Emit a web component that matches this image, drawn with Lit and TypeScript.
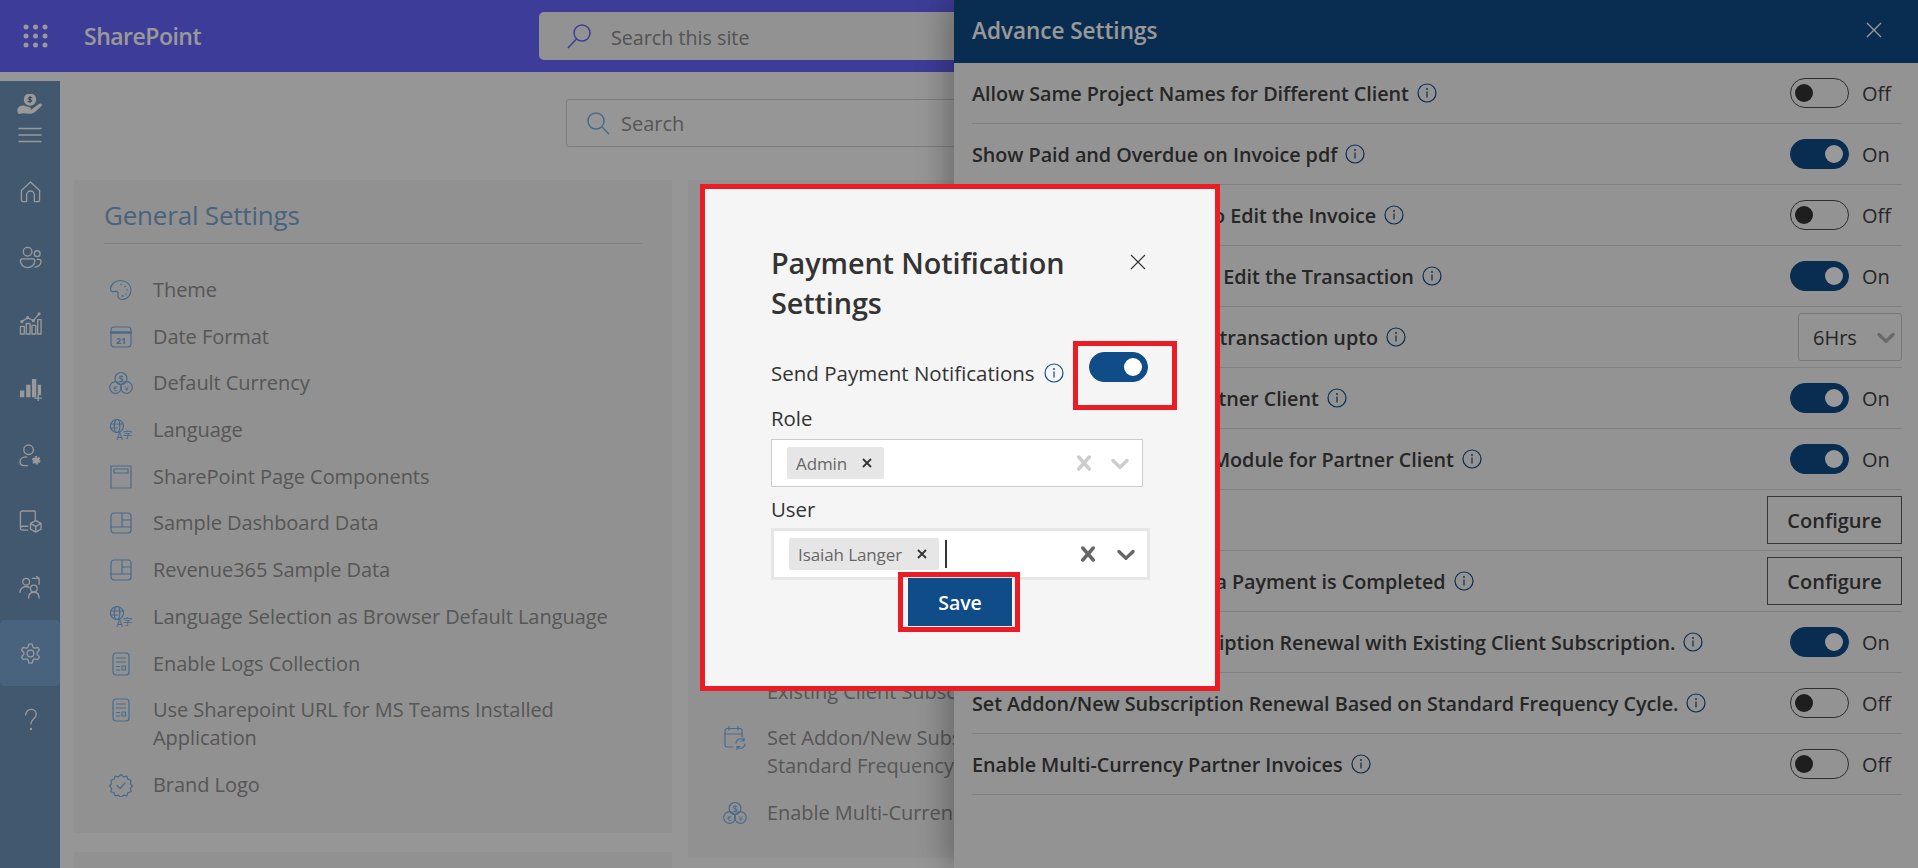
import { LitElement, html, svg, css, nothing } from "lit";
import { customElement } from "lit/decorators.js";

const handIcon = svg`<circle cx="13" cy="5.500" r="5.500" fill="#fff"/><path d="M13 2.500v6M15 3.800c-1.500-.8-3.800-.5-3.800.7 0 1.500 3.600.7 3.600 2.300 0 1.200-2.500 1.400-4 .6" stroke="#42586f" stroke-width=".9" fill="none"/><path fill="#fff" stroke="none" d="M1 14c2-2.500 5-3 7-2l4.500 1.300c2 .5 2 2 0 2.200h2L22 10c2-1.200 4 .5 2.500 2L18 18c-1.500 1.200-3.500 1.800-5.500 1.800L6 19.300 2.500 20C0 20 0 15 1 14z"/>`;

const cardIcons: Record<string, unknown> = {
  palette: svg`<path d="M11 2.500C5.500 2.500 1.500 7 1.500 11c0 2.500 2 3 4 2.500 2-.5 4 0 3.500 2.500-.5 2.500 0 5.500 4 5.500 5.500 0 9-4.500 9-9.500s-4.500-9.500-10.500-9.500z"/><circle cx="12" cy="6.500" r=".8" class="fill"/><circle cx="16" cy="8.500" r=".8" class="fill"/><circle cx="18" cy="12" r=".8" class="fill"/><circle cx="17" cy="16" r=".8" class="fill"/><circle cx="13.500" cy="18" r="1.100" class="fill"/>`,
  calendar: svg`<rect x="2" y="2" width="20" height="20" rx="3"/><path d="M2 7.500h20" stroke-width="2.400"/><text x="12" y="18.500" class="ic-text" font-size="9" font-weight="700">21</text>`,
  currency: svg`<circle cx="12" cy="7.500" r="6"/><circle cx="6.500" cy="16.500" r="5.800"/><circle cx="17.500" cy="16.500" r="5.800"/><text x="12" y="10.500" class="ic-text" font-size="9" font-weight="600">$</text><text x="6.300" y="19.500" class="ic-text" font-size="8">€</text><text x="17.500" y="19.500" class="ic-text" font-size="8">¥</text>`,
  language: svg`<circle cx="8" cy="8" r="6.500"/><ellipse cx="8" cy="8" rx="2.800" ry="6.500"/><path d="M1.500 6h13M1.500 10h7"/><text x="10.500" y="22" class="ic-text" font-size="10.500" font-weight="500">A</text><text x="18.500" y="19.500" class="ic-text cjk" font-size="9.500">字</text>`,
  page: svg`<rect x="2" y="1" width="20" height="22"/><rect x="5" y="4" width="14" height="4"/>`,
  dashboard: svg`<rect x="2" y="2" width="20" height="20" rx="3"/><path d="M2 16h20M13 2v14M13 9h9"/>`,
  log: svg`<rect x="4" y="1" width="16" height="22" rx="3"/><path d="M7.500 6h9M7.500 10h9M7.500 14.500h3M7.500 18h3"/><rect x="13" y="14" width="3.500" height="4"/>`,
  badge: svg`<path d="M12 1.500l2.600 2.300 3.300-.7 1 3.200 3.200 1-.7 3.300 2 2.400-2 2.400.7 3.300-3.200 1-1 3.200-3.300-.7-2.600 2.300-2.600-2.300-3.300.7-1-3.200-3.200-1 .7-3.300-2-2.400 2-2.400-.7-3.300 3.200-1 1-3.200 3.300.7z"/><path d="M8 12.500l3 3 5-5.500"/>`,
  calRefresh: svg`<path d="M10 21H4a2 2 0 0 1-2-2V4.500a2 2 0 0 1 2-2h13a2 2 0 0 1 2 2V11"/><path d="M2 8h17M6 0v4M15 0v4"/><path d="M13 17a4.500 4.500 0 0 1 8-2.500M21 12v3h-3M22 18a4.500 4.500 0 0 1-8 2.500M14 23.500v-3h3"/>`,
};

const generalItems = [
  ["palette", "Theme"],
  ["calendar", "Date Format"],
  ["currency", "Default Currency"],
  ["language", "Language"],
  ["page", "SharePoint Page Components"],
  ["dashboard", "Sample Dashboard Data"],
  ["dashboard", "Revenue365 Sample Data"],
  ["language", "Language Selection as Browser Default Language"],
  ["log", "Enable Logs Collection"],
  ["log", "Use Sharepoint URL for MS Teams Installed Application"],
  ["badge", "Brand Logo"],
];

const invoiceItems = [
  ["calRefresh", "Set Addon/New Subscription Renewal with\nExisting Client Subscription."],
  ["calRefresh", "Set Addon/New Subscription Renewal Based on\nStandard Frequency Cycle."],
  ["currency", "Enable Multi-Currency Partner Invoices"],
];

type Row = { label: string; kind: "off" | "on" | "select" | "button" };
const rows: Row[] = [
  { label: "Allow Same Project Names for Different Client", kind: "off" },
  { label: "Show Paid and Overdue on Invoice pdf", kind: "on" },
  { label: "Allow Partner Managers to Edit the Invoice", kind: "off" },
  { label: "Allow Partner Accounts to Edit the Transaction", kind: "on" },
  { label: "Allow Partners to edit the transaction upto", kind: "select" },
  { label: "Enable Invoice Tab for Partner Client", kind: "on" },
  { label: "Enable Client Agreement Module for Partner Client", kind: "on" },
  { label: "Payment Notification", kind: "button" },
  { label: "Send a Notification when a Payment is Completed", kind: "button" },
  { label: "Adjust Addon/New Subscription Renewal with Existing Client Subscription.", kind: "on" },
  { label: "Set Addon/New Subscription Renewal Based on Standard Frequency Cycle.", kind: "off" },
  { label: "Enable Multi-Currency Partner Invoices", kind: "off" },
];

const clearPath = "M14.348 14.849c-0.469 0.469-1.229 0.469-1.697 0l-2.651-3.030-2.651 3.029c-0.469 0.469-1.229 0.469-1.697 0-0.469-0.469-0.469-1.229 0-1.697l2.758-3.15-2.759-3.152c-0.469-0.469-0.469-1.228 0-1.697s1.228-0.469 1.697 0l2.652 3.031 2.651-3.031c0.469-0.469 1.228-0.469 1.697 0s0.469 1.229 0 1.697l-2.758 3.152 2.758 3.15c0.469 0.469 0.469 1.229 0 1.698z";
const chevronPath = "M4.516 7.548c0.436-0.446 1.043-0.481 1.576 0l3.908 3.747 3.908-3.747c0.533-0.481 1.141-0.446 1.574 0 0.436 0.445 0.408 1.197 0 1.615-0.406 0.418-4.695 4.502-4.695 4.502-0.217 0.223-0.502 0.335-0.787 0.335s-0.57-0.112-0.789-0.335c0 0-4.287-4.084-4.695-4.502s-0.436-1.17 0-1.615z";

@customElement("app-root")
export class AppRoot extends LitElement {
  static styles = css`
    :host {
      display: block;
      position: relative;
      width: 1918px;
      height: 868px;
      overflow: hidden;
      background: #fafafa;
      font-family: "Open Sans", "Liberation Sans", sans-serif;
    }
    * { box-sizing: border-box; }

    .topbar {
      height: 72px;
      background: #6665fd;
      display: flex;
      align-items: center;
    }
    .waffle { margin-left: 23px; width: 25px; height: 24px; display: block; }
    .brand { margin-left: 36px; width: 455px; font-size: 23px; font-weight: 600; color: #fff; letter-spacing: -0.5px; }
    .site-search {
      width: 700px;
      height: 48px;
      border-radius: 5px;
      background: #f4f4f6;
      display: flex;
      align-items: center;
      padding: 2px 0 0 27px;
      gap: 19px;
      color: #8a8a8a;
      font-size: 19.700px;
    }
    .site-search svg { width: 26px; height: 26px; fill: none; stroke: #6665fd; stroke-width: 1.500; margin-top: -2px; }

    .below { display: flex; margin-top: 9px; height: 787px; }
    .sidebar {
      width: 60px;
      flex: none;
      background: #6e93b9;
      display: flex;
      flex-direction: column;
      align-items: center;
    }
    .sidebar svg { display: block; fill: none; stroke: #fff; stroke-width: 1.400; stroke-linecap: round; stroke-linejoin: round; }
    .hand { margin-top: 13px; width: 26px; height: 20px; }
    .burger { margin-top: 11px; width: 24px; height: 20px; }
    .nav { margin-top: 13px; display: flex; flex-direction: column; width: 100%; }
    .nav-item { height: 66px; display: flex; align-items: center; justify-content: center; }
    .nav-item svg { width: 23px; height: 23px; }
    .nav-item.active { background: #7aa6d4; border-radius: 5px; }

    .main { flex: 1; padding: 18px 0 0 14px; min-width: 0; }
    .search {
      margin-left: 492px;
      width: 846px;
      height: 48px;
      border: 1px solid #cfcfcf;
      border-radius: 3px;
      display: flex;
      align-items: center;
      padding-left: 19px;
      gap: 11px;
      color: #8f8f8f;
      font-size: 20px;
    }
    .search svg { width: 24px; height: 24px; fill: none; stroke: #76b1eb; stroke-width: 1.500; }

    .columns { display: flex; gap: 16px; margin-top: 33px; align-items: flex-start; }
    .col { width: 598px; display: flex; flex-direction: column; gap: 19px; flex: none; }
    .card { background: #f2f2f2; padding: 18px 30px 0; }
    .card.general { height: 653px; }
    .card.stub { height: 100px; }
    .card.invoice { height: 678px; display: flex; flex-direction: column; justify-content: flex-end; padding: 0 30px 31px; }
    .card-title {
      font-size: 26px;
      line-height: 34px;
      color: #7aa5cf;
      padding-bottom: 11px;
      border-bottom: 1px solid #d4d4d4;
      margin-bottom: 32px;
      letter-spacing: -0.2px;
    }
    .items { display: flex; flex-direction: column; gap: 18.700px; }
    .item { display: flex; gap: 20px; font-size: 20px; line-height: 28px; color: #909090; letter-spacing: -0.05px; }
    .invoice .item span { white-space: pre-line; }
    .item svg {
      width: 24px;
      height: 24px;
      margin: 2px 0 0 5px;
      flex: none;
      fill: none;
      stroke: #76b1eb;
      stroke-width: 1.200;
      stroke-linejoin: round;
      stroke-linecap: round;
    }
    .item svg .fill { fill: #76b1eb; stroke: none; }
    .ic-text { fill: #76b1eb; stroke: none; text-anchor: middle; font-family: "Open Sans", sans-serif; }
    .ic-text.cjk { font-family: "Noto Sans CJK SC", sans-serif; }

    .panel {
      position: absolute;
      top: 0;
      right: 0;
      width: 964px;
      height: 868px;
      background: #f5f5f5;
      box-shadow: -8px 0 28px rgba(0, 0, 0, 0.28);
    }
    .panel-head {
      height: 63px;
      background: #0f4c88;
      color: #fff;
      display: flex;
      align-items: center;
      justify-content: space-between;
      padding: 0 36px 3px 18px;
      font-size: 22.500px;
      font-weight: 600;
    }
    .panel-head svg { width: 16px; height: 16px; stroke: #fff; stroke-width: 1.400; fill: none; }
    .panel-body { padding: 0 16px 0 18px; }
    .row {
      height: 61px;
      border-bottom: 1px solid #d8d8d8;
      display: flex;
      align-items: center;
      justify-content: space-between;
    }
    .row-label { display: flex; align-items: center; gap: 8px; font-size: 19.800px; font-weight: 600; color: #404040; letter-spacing: -0.05px; }
    .info { width: 20px; height: 20px; flex: none; display: block; fill: none; stroke: #0f4c88; stroke-width: 1.200; }
    .info .dot { fill: #0f4c88; stroke: none; }
    .switch-wrap { width: 112px; display: flex; align-items: center; gap: 13px; font-size: 20px; color: #404040; }
    .switch { width: 59px; height: 30px; border-radius: 15px; border: 1px solid #4d4d4d; position: relative; display: block; flex: none; }
    .switch::after {
      content: "";
      position: absolute;
      top: 5px;
      left: 4px;
      width: 18px;
      height: 18px;
      border-radius: 50%;
      background: #333;
    }
    .switch.on { background: #0f4c88; border-color: #0f4c88; }
    .switch.on::after { left: auto; right: 5px; background: #fff; }
    .hours {
      width: 104px;
      height: 48px;
      border: 1px solid #c8c8c8;
      border-radius: 3px;
      display: flex;
      align-items: center;
      justify-content: space-between;
      padding: 0 0 0 14px;
      font-size: 20px;
      color: #404040;
    }
    .hours svg { width: 30px; height: 30px; fill: #b0b0b0; }
    .configure {
      width: 135px;
      height: 48px;
      border: 1px solid #5a5a5a;
      background: none;
      font: 600 20px "Open Sans", sans-serif;
      color: #404040;
      padding: 0;
    }

    .scrim { position: absolute; inset: 0; background: rgba(0, 0, 0, 0.4); }

    .modal {
      position: absolute;
      left: 700px;
      top: 184px;
      width: 520px;
      height: 507px;
      background: #f5f5f5;
      border: 5px solid #ec1c24;
      padding: 54px 0 0 66px;
      color: #333;
    }
    .modal-head { display: flex; align-items: flex-start; }
    .modal-title { width: 342px; font-size: 28.800px; font-weight: 600; line-height: 40px; letter-spacing: -0.1px; }
    .modal-close { width: 16px; height: 16px; margin: 11px 0 0 17px; stroke: #333; stroke-width: 1.100; fill: none; display: block; }
    .notify { display: flex; width: 406px; height: 63px; margin-top: 18px; justify-content: space-between; align-items: flex-start; }
    .notify-label { display: flex; align-items: center; gap: 9px; margin-top: 18px; font-size: 20.500px; line-height: 28px; font-weight: 500; }
    .mark-toggle { width: 104px; height: 69px; border: 5px solid #ec1c24; padding: 6px 0 0 11px; flex: none; }
    .field-label { font-size: 20.400px; line-height: 28px; font-weight: 500; }
    .multi { display: flex; align-items: center; background: #fff; }
    .multi svg { display: block; flex: none; }
    .multi.role { width: 372px; height: 48px; margin-top: 7px; border: 1px solid #ccc; padding: 0 7px 0 15px; color: #ccc; fill: #ccc; gap: 6px; }
    .multi.user { width: 379px; height: 52px; margin-top: 5px; border: 3px solid #e6e6e6; padding: 0 6px 0 15px; gap: 8px; }
    .multi.user svg { fill: #666; }
    .field-label.user-label { margin-top: 8px; }
    .values { flex: 1; display: flex; align-items: center; }
    .chip {
      height: 32px;
      display: flex;
      align-items: center;
      background: #e6e6e6;
      border-radius: 2px;
      padding: 0 10px 0 9px;
      font-size: 17px;
      color: #666;
      gap: 13px;
      letter-spacing: -0.1px;
    }
    .chip svg { width: 14px; height: 14px; fill: #333 !important; stroke: #333; stroke-width: 1.800; }
    .caret { width: 1.500px; height: 28px; background: #333; margin-left: 6px; }
    .indicator { width: 30px; height: 30px; }
    .mark-save {
      position: relative;
      margin: -8px 0 0 127px;
      width: 122px;
      height: 60px;
      border: 5px solid #ec1c24;
      padding: 1px 3px 1px 5px;
    }
    .save {
      width: 104px;
      height: 48px;
      display: block;
      border: 0;
      padding: 0;
      background: #0f4c88;
      color: #fff;
      font: 600 19.500px "Open Sans", sans-serif;
    }
  `;

  private info() {
    return html`<svg class="info" viewBox="0 0 20 20"><circle cx="10" cy="10" r="9"/><rect class="dot" x="9.400" y="8.500" width="1.200" height="6"/><circle class="dot" cx="10" cy="6" r=".9"/></svg>`;
  }

  private control(kind: Row["kind"]) {
    if (kind === "on" || kind === "off") {
      return html`<div class="switch-wrap"><span class="switch ${kind === "on" ? "on" : ""}"></span>${kind === "on" ? "On" : "Off"}</div>`;
    }
    if (kind === "select") {
      return html`<div class="hours">6Hrs<svg viewBox="0 0 20 20"><path d=${chevronPath}/></svg></div>`;
    }
    if (kind === "button") return html`<button class="configure">Configure</button>`;
    return nothing;
  }

  private item(icon: string, label: string) {
    return html`<div class="item"><svg viewBox="0 0 24 24">${cardIcons[icon]}</svg><span>${label}</span></div>`;
  }

  render() {
    return html`
      <div class="topbar">
        <svg class="waffle" viewBox="0 0 25 24" fill="#fff">
          ${[3, 12.500, 22].map((x) => [3, 12, 21].map((y) => svg`<circle cx=${x} cy=${y} r="2.500"/>`))}
        </svg>
        <span class="brand">SharePoint</span>
        <div class="site-search">
          <svg viewBox="0 0 26 26"><circle cx="16" cy="10" r="8"/><path d="M10.500 16L2 25"/></svg>
          Search this site
        </div>
      </div>
      <div class="below">
        <nav class="sidebar">
          <svg class="hand" viewBox="0 0 26 20">${handIcon}</svg>
          <svg class="burger" viewBox="0 0 24 20"><path d="M1 3.500h22M1 10h22M1 16.500h22"/></svg>
          <div class="nav">
            <div class="nav-item"><svg viewBox="0 0 24 24"><path d="M2.500 11L12 2l9.500 9v9.500a2 2 0 0 1-2 2H16v-7a4 4 0 0 0-8 0v7H4.500a2 2 0 0 1-2-2z"/></svg></div>
            <div class="nav-item"><svg viewBox="0 0 24 24"><circle cx="9" cy="6" r="4.500"/><circle cx="19" cy="8" r="3"/><path d="M3.500 13.500h11a2 2 0 0 1 2 2c0 4-3.500 7-7.500 7s-7.500-3-7.500-7a2 2 0 0 1 2-2zM19 14h2a2 2 0 0 1 2 2c0 3.500-3 6-6.500 6"/></svg></div>
            <div class="nav-item"><svg viewBox="0 0 24 24"><rect x="1.500" y="15" width="4" height="8"/><rect x="7.500" y="12" width="4" height="11"/><rect x="13.500" y="14" width="4" height="9"/><rect x="19.500" y="8" width="3.500" height="15"/><path d="M3 10l6-4 6 3 6-7"/><circle cx="3" cy="10" r="1"/><circle cx="9" cy="6" r="1"/><circle cx="15" cy="9" r="1"/><circle cx="21" cy="2" r="1"/></svg></div>
            <div class="nav-item"><svg viewBox="0 0 24 24"><path fill="#fff" stroke="none" d="M1 13h4.500v7H1zM7.500 7h4.500v13H7.500zM13.500 1h4.500v19h-4.500zM19.500 7H23v11h-3.500z"/><path d="M20 18v5.500M16.500 21h7"/></svg></div>
            <div class="nav-item"><svg viewBox="0 0 24 24"><circle cx="10" cy="6" r="5"/><path d="M8 13.500c-4 0-7 2-7 5 0 2.500 2 4 5 4h3"/><circle cx="18" cy="17" r="3" fill="#fff" stroke-width="3" stroke-dasharray="2 1.100" stroke-linecap="butt"/></svg></div>
            <div class="nav-item"><svg viewBox="0 0 24 24"><path d="M9 21H3.500a2 2 0 0 1-2-2V3a2 2 0 0 1 2-2h12.500a1 1 0 0 1 1 1v8M1.500 19a2 2 0 0 1 2-2H9"/><path d="M17.500 11l5.500 3v6l-5.500 3-5.500-3v-6zM12 14l5.500 3 5.500-3M17.500 17v6"/></svg></div>
            <div class="nav-item"><svg viewBox="0 0 24 24"><circle cx="7.500" cy="6" r="3.500"/><path d="M1 17c0-3.500 3-6 6.500-6 1 0 2 .2 3 .8"/><circle cx="15.500" cy="13" r="3.500"/><path d="M10 23c0-3.500 2-6 5.500-6s5.500 2.500 5.500 6M14 2.500h7v6M18 0l3 2.500"/></svg></div>
            <div class="nav-item active"><svg viewBox="0 0 24 24"><path d="M12.220 2h-.44a2 2 0 0 0-2 2v.18a2 2 0 0 1-1 1.730l-.43.25a2 2 0 0 1-2 0l-.15-.08a2 2 0 0 0-2.730.73l-.22.38a2 2 0 0 0 .73 2.730l.15.1a2 2 0 0 1 1 1.720v.51a2 2 0 0 1-1 1.740l-.15.09a2 2 0 0 0-.73 2.730l.22.38a2 2 0 0 0 2.730.73l.15-.08a2 2 0 0 1 2 0l.43.25a2 2 0 0 1 1 1.730V20a2 2 0 0 0 2 2h.44a2 2 0 0 0 2-2v-.18a2 2 0 0 1 1-1.730l.43-.25a2 2 0 0 1 2 0l.15.08a2 2 0 0 0 2.730-.73l.22-.39a2 2 0 0 0-.73-2.730l-.15-.08a2 2 0 0 1-1-1.740v-.5a2 2 0 0 1 1-1.740l.15-.09a2 2 0 0 0 .73-2.730l-.22-.38a2 2 0 0 0-2.730-.73l-.15.08a2 2 0 0 1-2 0l-.43-.25a2 2 0 0 1-1-1.730V4a2 2 0 0 0-2-2z"/><circle cx="12" cy="12" r="3.500"/></svg></div>
            <div class="nav-item"><svg viewBox="0 0 24 24"><path d="M7 7c0-3 2.500-5.500 5.500-5.500S18 3.500 18 6.500c0 4.500-5.500 5-5.500 10"/><circle cx="12.500" cy="22" r=".6"/></svg></div>
          </div>
        </nav>
        <div class="main">
          <div class="search">
            <svg viewBox="0 0 24 24"><circle cx="10" cy="10" r="8"/><path d="M16 16l7 7"/></svg>
            Search
          </div>
          <div class="columns">
            <div class="col">
              <section class="card general">
                <div class="card-title">General Settings</div>
                <div class="items">${generalItems.map(([i, l]) => this.item(i, l))}</div>
              </section>
              <section class="card stub"></section>
            </div>
            <div class="col">
              <section class="card invoice">
                <div class="items">${invoiceItems.map(([i, l]) => this.item(i, l))}</div>
              </section>
            </div>
          </div>
        </div>
      </div>

      <aside class="panel">
        <div class="panel-head">
          Advance Settings
          <svg viewBox="0 0 16 16"><path d="M1 1l14 14M15 1L1 15"/></svg>
        </div>
        <div class="panel-body">
          ${rows.map(
            (r) => html`<div class="row">
              <div class="row-label">${r.label}${this.info()}</div>
              ${this.control(r.kind)}
            </div>`,
          )}
        </div>
      </aside>

      <div class="scrim"></div>

      <div class="modal">
        <div class="modal-head">
          <div class="modal-title">Payment Notification Settings</div>
          <svg class="modal-close" viewBox="0 0 16 16"><path d="M1 1l14 14M15 1L1 15"/></svg>
        </div>
        <div class="notify">
          <div class="notify-label">Send Payment Notifications ${this.info()}</div>
          <div class="mark-toggle"><span class="switch on"></span></div>
        </div>
        <div class="field-label">Role</div>
        <div class="multi role">
          <div class="values">
            <div class="chip">Admin<svg viewBox="0 0 14 14"><path d="M3 3l8 8M11 3l-8 8"/></svg></div>
          </div>
          <svg class="indicator" viewBox="0 0 20 20"><path d=${clearPath}/></svg>
          <svg class="indicator" viewBox="0 0 20 20"><path d=${chevronPath}/></svg>
        </div>
        <div class="field-label user-label">User</div>
        <div class="multi user">
          <div class="values">
            <div class="chip">Isaiah Langer<svg viewBox="0 0 14 14"><path d="M3 3l8 8M11 3l-8 8"/></svg></div>
            <span class="caret"></span>
          </div>
          <svg class="indicator" viewBox="0 0 20 20"><path d=${clearPath}/></svg>
          <svg class="indicator" viewBox="0 0 20 20"><path d=${chevronPath}/></svg>
        </div>
        <div class="mark-save"><button class="save">Save</button></div>
      </div>
    `;
  }
}
